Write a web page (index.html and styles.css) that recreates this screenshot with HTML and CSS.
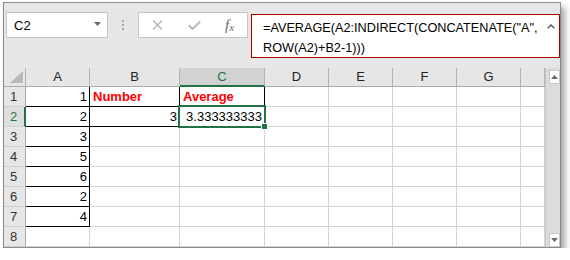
FILE: index.html
```html
<!DOCTYPE html>
<html lang="en">
<head>
  <meta charset="UTF-8">
  <title>Excel - INDIRECT average</title>
  <link rel="stylesheet" href="styles.css">
</head>
<body>
  <div class="window">
    <!-- Name box + formula bar -->
    <div class="toolbar">
      <div class="namebox">
        <span>C2</span>
        <svg class="dd" width="7" height="4" viewBox="0 0 7 4"><polygon points="0,0 7,0 3.5,4" fill="#6a6a6a"/></svg>
      </div>
      <div class="grip"><i></i><i></i><i></i></div>
      <div class="fbtns">
        <svg width="11" height="10" viewBox="0 0 11 10"><path d="M1 0.5 L10 9.5 M10 0.5 L1 9.5" stroke="#b4b4b4" stroke-width="1.4" fill="none"/></svg>
        <svg width="13" height="9" viewBox="0 0 13 9"><path d="M0.8 4.2 L4.5 8 L12.2 0.6" stroke="#b4b4b4" stroke-width="1.8" fill="none"/></svg>
        <span class="fx">f<sub>x</sub></span>
      </div>
      <div class="formula">
        <div class="ftext">=AVERAGE(A2:INDIRECT(CONCATENATE("A", ROW(A2)+B2-1)))</div>
        <svg class="caret" width="8" height="5" viewBox="0 0 8 5"><path d="M0.7 4.3 L4 1 L7.3 4.3" stroke="#555" stroke-width="1.4" fill="none"/></svg>
      </div>
    </div>

    <!-- Sheet -->
    <div class="sheet">
      <div class="grid">
        <div class="ch corner"><svg width="13" height="12" viewBox="0 0 13 12"><polygon points="13,0 13,12 0,12" fill="#b9b9b9"/></svg></div>
        <div class="ch">A</div>
        <div class="ch">B</div>
        <div class="ch sel">C</div>
        <div class="ch">D</div>
        <div class="ch">E</div>
        <div class="ch">F</div>
        <div class="ch">G</div>
        <div class="ch"></div>

        <div class="rh">1</div>
        <div class="c num bd">1</div>
        <div class="c txt red bd">Number</div>
        <div class="c txt red bd">Average</div>
        <div class="c"></div><div class="c"></div><div class="c"></div><div class="c"></div><div class="c"></div>

        <div class="rh sel">2</div>
        <div class="c num bd">2</div>
        <div class="c num bd">3</div>
        <div class="c num active">3.333333333</div>
        <div class="c"></div><div class="c"></div><div class="c"></div><div class="c"></div><div class="c"></div>

        <div class="rh">3</div>
        <div class="c num bd">3</div>
        <div class="c"></div><div class="c"></div><div class="c"></div><div class="c"></div><div class="c"></div><div class="c"></div><div class="c"></div>

        <div class="rh">4</div>
        <div class="c num bd">5</div>
        <div class="c"></div><div class="c"></div><div class="c"></div><div class="c"></div><div class="c"></div><div class="c"></div><div class="c"></div>

        <div class="rh">5</div>
        <div class="c num bd">6</div>
        <div class="c"></div><div class="c"></div><div class="c"></div><div class="c"></div><div class="c"></div><div class="c"></div><div class="c"></div>

        <div class="rh">6</div>
        <div class="c num bd">2</div>
        <div class="c"></div><div class="c"></div><div class="c"></div><div class="c"></div><div class="c"></div><div class="c"></div><div class="c"></div>

        <div class="rh">7</div>
        <div class="c num bd">4</div>
        <div class="c"></div><div class="c"></div><div class="c"></div><div class="c"></div><div class="c"></div><div class="c"></div><div class="c"></div>

        <div class="rh">8</div>
        <div class="c"></div><div class="c"></div><div class="c"></div><div class="c"></div><div class="c"></div><div class="c"></div><div class="c"></div><div class="c"></div>
      </div>

      <div class="vscroll">
        <div class="sbtn"><svg width="7" height="4" viewBox="0 0 7 4"><polygon points="0,4 7,4 3.5,0" fill="#6a6a6a"/></svg></div>
        <div class="strack"></div>
        <div class="sbtn"><svg width="7" height="4" viewBox="0 0 7 4"><polygon points="0,0 7,0 3.5,4" fill="#6a6a6a"/></svg></div>
      </div>
    </div>
  </div>
</body>
</html>
```

FILE: styles.css
```css
body {
  margin: 0;
  background-color: #fff;
  font-family: "Liberation Sans", Arial, sans-serif;
  font-size: 13px;
  color: #000;
}
.window {
  box-sizing: border-box;
  width: 558px;
  height: 246px;
  margin: 2px 0 0 3px;
  border: 1px solid #8a8a8a;
  background-color: #e6e6e6;
  box-shadow: 4px 5px 6px rgba(0, 0, 0, 0.35);
  display: flex;
  flex-direction: column;
}

/* toolbar */
.toolbar {
  height: 65px;
  flex-shrink: 0;
  display: flex;
  align-items: flex-start;
  padding: 9px 0 0 2px;
  box-sizing: border-box;
}
.namebox {
  box-sizing: border-box;
  flex-shrink: 0;
  width: 102px;
  height: 26px;
  background-color: #fff;
  border: 1px solid #c6c6c6;
  display: flex;
  align-items: center;
  justify-content: space-between;
  padding: 0 6px 0 7px;
  font-size: 13px;
}
.namebox .dd {
  margin-top: -2px;
}
.grip {
  flex-shrink: 0;
  width: 30px;
  height: 26px;
  display: flex;
  flex-direction: column;
  align-items: center;
  justify-content: center;
  gap: 2px;
}
.grip i {
  width: 2px;
  height: 2px;
  background-color: #a6a6a6;
}
.fbtns {
  box-sizing: border-box;
  flex-shrink: 0;
  width: 110px;
  height: 26px;
  background-color: #fff;
  border: 1px solid #c6c6c6;
  display: flex;
  align-items: center;
  padding-left: 13px;
  gap: 25px;
}
.fx {
  font-family: "Liberation Serif", "Times New Roman", serif;
  font-style: italic;
  font-size: 15px;
  color: #666;
  margin-left: -1px;
}
.fx sub {
  font-size: 11px;
  vertical-align: baseline;
  position: relative;
  top: 1px;
}
.formula {
  flex: 1;
  min-width: 0;
  box-sizing: border-box;
  height: 44px;
  margin: 2px 0 0 3px;
  background-color: #fff;
  border: 1px solid #a30000;
  display: flex;
  align-items: flex-start;
  padding: 3px 4px 0 11px;
}
.ftext {
  flex: 1;
  min-width: 0;
  line-height: 20px;
  font-size: 12.7px;
  padding-right: 6px;
}
.caret {
  flex-shrink: 0;
  margin-top: 6px;
}

/* sheet */
.sheet {
  flex: 1;
  display: flex;
  min-height: 0;
}
.grid {
  display: grid;
  grid-template-columns: 22px 64px 90px 85px 64px 64px 64px 64px 24px;
  grid-template-rows: 19px repeat(8, 20px);
  background-color: #fff;
}
.grid > div {
  box-sizing: border-box;
  border-right: 1px solid #d4d4d4;
  border-bottom: 1px solid #d4d4d4;
  line-height: 19px;
  white-space: nowrap;
}
.grid .ch {
  background-color: #e6e6e6;
  border-right-color: #b3b3b3;
  border-bottom-color: #ababab;
  text-align: center;
  color: #222;
  line-height: 18px;
}
.grid .ch.corner {
  display: flex;
  align-items: flex-end;
  justify-content: flex-end;
  padding: 0 2px 3px 0;
}
.grid .ch.sel {
  background-color: #d2d2d2;
  border-bottom: 2px solid #217346;
  color: #217346;
}
.grid .rh {
  background-color: #e6e6e6;
  border-right-color: #ababab;
  border-bottom-color: #cfcfcf;
  padding-left: 6px;
  color: #333;
}
.grid .rh.sel {
  background-color: #dedede;
  border-right: 2px solid #217346;
  color: #217346;
}
.grid .num {
  text-align: right;
  padding-right: 2px;
}
.grid .txt {
  padding-left: 3px;
}
.grid .red {
  color: #ff0000;
  font-weight: bold;
}
.grid .bd {
  border-right-color: #000;
  border-bottom-color: #000;
}
.grid .active {
  position: relative;
}
.grid .active::before {
  content: "";
  position: absolute;
  top: -2px;
  left: -2px;
  right: -2px;
  bottom: -2px;
  border: 2px solid #217346;
}
.grid .active::after {
  content: "";
  position: absolute;
  right: -4px;
  bottom: -4px;
  width: 5px;
  height: 5px;
  background-color: #217346;
  border: 1px solid #fff;
}

/* scrollbar */
.vscroll {
  width: 15px;
  box-sizing: border-box;
  padding-left: 3px;
  background-color: #dcdcdc;
  border-left: 1px solid #c8c8c8;
  display: flex;
  flex-direction: column;
}
.sbtn {
  height: 14px;
  box-sizing: border-box;
  background-color: #fff;
  border: 1px solid #c8c8c8;
  display: flex;
  align-items: center;
  justify-content: center;
}
.sbtn:first-child {
  margin-top: 2px;
}
.strack {
  flex: 1;
}
```
